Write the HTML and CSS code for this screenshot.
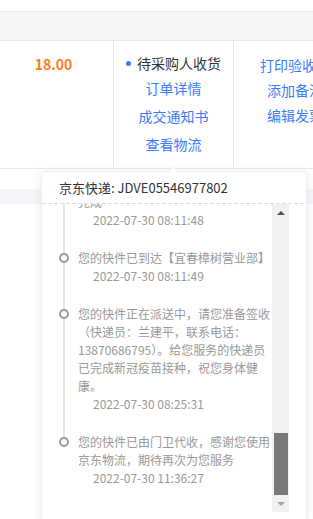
FILE: index.html
```html
<!DOCTYPE html>
<html lang="zh-CN">
<head>
  <meta charset="UTF-8">
  <title>订单物流</title>
  <link rel="stylesheet" href="styles.css">
</head>
<body>
  <div class="page">
    <div class="topbar"></div>
    <div class="thead"></div>

    <div class="trow">
      <div class="cell cell-price"><span class="price">18.00</span></div>
      <div class="cell cell-status">
        <div class="status"><i class="dot"></i>待采购人收货</div>
        <a class="link">订单详情</a>
        <a class="link">成交通知书</a>
        <a class="link">查看物流</a>
      </div>
      <div class="cell cell-ops">
        <a class="op">打印验收单</a>
        <a class="op">添加备注</a>
        <a class="op">编辑发票</a>
      </div>
    </div>

    <div class="spacer"></div>
    <div class="band"></div>

    <div class="popover">
      <div class="pop-head">京东快递: JDVE05546977802</div>
      <div class="pop-body">
        <div class="track-list">
          <div class="track-item">
            <div class="track-text">您的快件在【京东南昌分拣中心】已完成分拣</div>
            <div class="track-time">2022-07-29 21:40:12</div>
          </div>
          <div class="track-item">
            <div class="track-text">您的快件在【宜春樟树营业部】分拣完成</div>
            <div class="track-time">2022-07-30 08:11:48</div>
          </div>
          <div class="track-item">
            <div class="track-text">您的快件已到达【宜春樟树营业部】</div>
            <div class="track-time">2022-07-30 08:11:49</div>
          </div>
          <div class="track-item">
            <div class="track-text">您的快件正在派送中，请您准备签收（快递员：兰建平，联系电话：13870686795）。给您服务的快递员已完成新冠疫苗接种，祝您身体健康。</div>
            <div class="track-time">2022-07-30 08:25:31</div>
          </div>
          <div class="track-item">
            <div class="track-text">您的快件已由门卫代收，感谢您使用京东物流，期待再次为您服务</div>
            <div class="track-time">2022-07-30 11:36:27</div>
          </div>
        </div>
        <div class="scrollbar">
          <div class="sb-btn sb-up"><i></i></div>
          <div class="sb-track"><div class="sb-thumb"></div></div>
          <div class="sb-btn sb-down"><i></i></div>
        </div>
      </div>
    </div>
  </div>
</body>
</html>
```

FILE: styles.css
```css
html, body {
  margin: 0;
  padding: 0;
  background: #fff;
}
body {
  font-family: "Noto Sans CJK SC", "Noto Sans", sans-serif;
  color: #333;
  overflow: hidden;
}
.page {
  position: relative;
  width: 313px;
  height: 519px;
  overflow: hidden;
}
.topbar {
  height: 11px;
}
.thead {
  height: 28px;
  background: #f5f5f5;
  border-top: 1px solid #e8e8e8;
  border-bottom: 1px solid #e8e8e8;
}
.trow {
  display: grid;
  grid-template-columns: 114px 120px 122px;
  height: 127px;
  border-bottom: 1px solid #e8e8e8;
}
.cell {
  border-right: 1px solid #e8e8e8;
  text-align: center;
  font-size: 14px;
}
.cell-price {
  padding: 13px 6px 0 0;
  line-height: 20px;
}
.price {
  color: #ff7a1f;
  font-weight: 700;
  font-size: 14px;
}
.cell-status {
  padding-top: 12px;
  display: flex;
  flex-direction: column;
  align-items: center;
}
.status {
  line-height: 20px;
  display: flex;
  align-items: center;
  color: #333;
}
.dot {
  width: 5px;
  height: 5px;
  border-radius: 50%;
  background: #3b7cff;
  margin-right: 6px;
}
.link {
  display: block;
  line-height: 28px;
  color: #3b7cff;
}
.cell-status .status + .link {
  margin-top: 1px;
}
.cell-ops {
  border-right: none;
  padding-top: 12px;
  display: flex;
  flex-direction: column;
  align-items: center;
}
.op {
  display: block;
  line-height: 25px;
  color: #3b7cff;
}
.spacer {
  height: 20px;
}
.band {
  height: 15px;
  background: #f5f6f9;
}

/* logistics popover */
.popover {
  position: absolute;
  top: 171px;
  left: 41px;
  width: 266px;
  box-sizing: border-box;
  background: #fff;
  border: 1px solid #ebeef5;
  border-radius: 4px;
  box-shadow: 0 2px 12px rgba(0, 0, 0, 0.08);
  padding-bottom: 12px;
}
.popover::before {
  content: "";
  position: absolute;
  top: -4px;
  left: 127px;
  width: 8px;
  height: 8px;
  background: #fff;
  border-top: 1px solid #ebeef5;
  border-left: 1px solid #ebeef5;
  transform: rotate(45deg);
}
.pop-head {
  height: 32px;
  box-sizing: border-box;
  padding-left: 17px;
  line-height: 31px;
  font-size: 13px;
  color: #333;
  background-image: repeating-linear-gradient(to right, #dcdcdc 0 4px, transparent 4px 6px);
  background-size: 100% 1px;
  background-position: left bottom;
  background-repeat: no-repeat;
}
.pop-body {
  display: flex;
  height: 308px;
  padding: 0 17px 0 15px;
}
.track-list {
  flex: 1;
  overflow: hidden;
  display: flex;
  flex-direction: column;
  justify-content: flex-end;
  padding: 0 0 5px 6px;
}
.track-item {
  position: relative;
  flex-shrink: 0;
  padding: 0 0 20px 15px;
  font-size: 12px;
  line-height: 18px;
  color: #999;
}
.track-item::before {
  content: "";
  position: absolute;
  z-index: 1;
  left: -4px;
  top: 4px;
  width: 10px;
  height: 10px;
  box-sizing: border-box;
  border: 2px solid #999;
  border-radius: 50%;
  background: #fff;
}
.track-item::after {
  content: "";
  position: absolute;
  left: 0;
  top: 0;
  bottom: 0;
  width: 2px;
  background: #e4e4e4;
}
.track-item:last-child::after {
  bottom: auto;
  height: 6px;
}
.track-time {
  padding-left: 15px;
}

/* scrollbar drawn at its bottom position */
.scrollbar {
  width: 17px;
  flex-shrink: 0;
  background: #f1f1f1;
  display: flex;
  flex-direction: column;
}
.sb-btn {
  height: 17px;
  display: flex;
  align-items: center;
  justify-content: center;
}
.sb-btn i {
  width: 0;
  height: 0;
  border-left: 4px solid transparent;
  border-right: 4px solid transparent;
}
.sb-up i {
  border-bottom: 4px solid #505050;
}
.sb-down i {
  border-top: 4px solid #a3a3a3;
}
.sb-track {
  flex: 1;
  display: flex;
  flex-direction: column;
}
.sb-thumb {
  margin: auto 1px 0 2px;
  height: 62px;
  background: #787878;
}
```
